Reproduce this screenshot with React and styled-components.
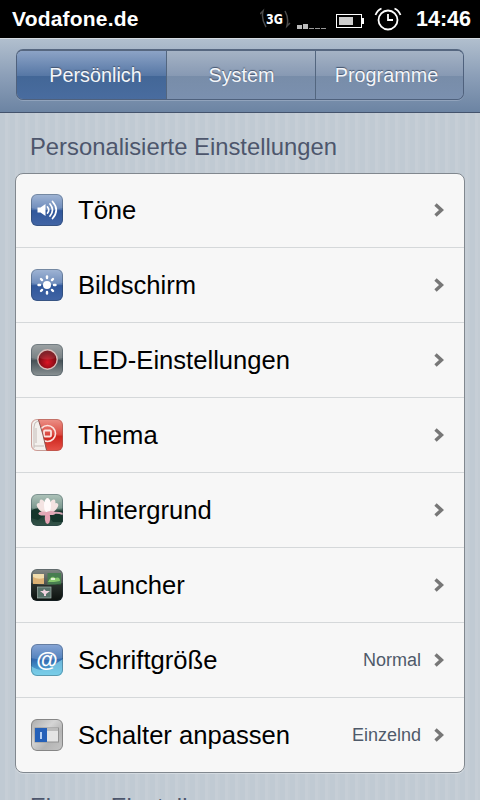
import React from 'react';
import styled, { createGlobalStyle } from 'styled-components';

const GlobalStyle = createGlobalStyle`
  * {
    box-sizing: border-box;
  }
  body {
    margin: 0;
    overflow: hidden;
    font-family: "Liberation Sans", Arial, sans-serif;
  }
`;

const Screen = styled.div`
  display: flex;
  flex-direction: column;
  width: 480px;
  height: 800px;
  overflow: hidden;
  background: repeating-linear-gradient(90deg, #c0cad3 0 5px, #c6ced6 5px 8px, #c3ccd4 8px 10px);
`;

const StatusBar = styled.header`
  display: flex;
  flex: none;
  align-items: center;
  height: 38px;
  padding: 0 9px 0 12px;
  background: #000;
  color: #fff;
  font-weight: bold;
`;
const Carrier = styled.span`
  flex: 1;
  font-size: 21px;
  letter-spacing: 0.2px;
`;
const StatusIcons = styled.svg`
  display: block;
  width: 148px;
  height: 38px;
  margin-right: 8px;
`;
const Clock = styled.span`
  width: 55px;
  font-size: 21.5px;
  white-space: nowrap;
`;

const NavBar = styled.nav`
  flex: none;
  height: 75px;
  padding: 10px 16px 0;
  background: linear-gradient(#b1bfce, #8c9fb8 50%, #6c84a3);
  border-top: 1px solid #d5dbe2;
  border-bottom: 1px solid #44536c;
`;
const Segments = styled.div`
  display: grid;
  grid-template-columns: 150px 149px 1fr;
  height: 51px;
  border: 1px solid #4f617d;
  border-top: 2px solid #566780;
  border-radius: 7px;
  overflow: hidden;
  box-shadow: 0 1px 0 #91a3bc;
`;
const Segment = styled.button`
  padding: 0 ${({ $right }) => $right || 0}px 0 ${({ $left }) => $left || 0}px;
  border: 0;
  border-right: ${({ $last }) => ($last ? '0' : '1px solid #53667f')};
  background: ${({ $active }) =>
    $active
      ? 'linear-gradient(#8ca3c6, #5677a5 52%, #436797 53%, #496c9f)'
      : 'linear-gradient(#a5b3c5, #8799b3 52%, #788da9 53%, #7b90af)'};
  color: #f4f6fa;
  font-family: inherit;
  font-size: 19.8px;
  text-shadow: 0 -1px 1px #44546d;
`;

const Heading = styled.h2`
  flex: none;
  height: 60px;
  margin: 0;
  padding-left: 30px;
  color: #4d566c;
  font-size: 23.8px;
  font-weight: normal;
  line-height: 67px;
  white-space: nowrap;
`;

const Card = styled.ul`
  flex: none;
  width: 450px;
  margin: 0 15px;
  padding: 0;
  list-style: none;
  border: 1px solid #81888f;
  border-radius: 8px;
  background: #f7f7f7;
  box-shadow: 0 1px 0 #d3dae0;
`;
const Row = styled.li`
  display: flex;
  align-items: center;
  height: 75px;
  padding: 0 20px 0 15px;
  border-bottom: 1px solid #d5d8da;
  &:first-child {
    height: 74px;
    padding-bottom: 1px;
  }
  &:last-child {
    height: 74px;
    border-bottom: 0;
  }
`;
const RowIcon = styled.svg`
  display: block;
  flex: none;
  width: 32px;
  height: 32px;
  border-radius: 6px;
`;
const Label = styled.span`
  flex: 1;
  margin-left: 15px;
  color: #000;
  font-size: 25.6px;
  white-space: nowrap;
`;
const Value = styled.span`
  margin-right: 13px;
  color: #4f5a6a;
  font-size: 18px;
`;
const Chevron = styled.svg`
  display: block;
  flex: none;
  width: 10px;
  height: 14px;
`;

const Gloss = () => (
  <>
    <path d="M0 0H32V14Q16 18 0 14Z" fill="#fff" opacity=".15" />
    <rect x=".5" y=".5" width="31" height="31" rx="5.5" fill="none" stroke="#263746" strokeOpacity=".35" />
  </>
);

const SoundIcon = () => (
  <RowIcon viewBox="0 0 32 32">
    <defs>
      <linearGradient id="blue" x2="0" y2="1">
        <stop offset="0" stopColor="#91a9ce" />
        <stop offset=".48" stopColor="#5477af" />
        <stop offset=".52" stopColor="#30579b" />
        <stop offset="1" stopColor="#4265a5" />
      </linearGradient>
    </defs>
    <rect width="32" height="32" fill="url(#blue)" />
    <path d="M6.500 13.500h3l5-3.500v12l-5-3.500h-3Z" fill="#fff" />
    <path d="M16.500 13q2.500 3 0 6M19 10q5 6 0 12M21.500 7.500q7.500 8.500 0 17" fill="none" stroke="#fff" strokeWidth="1.700" strokeLinecap="round" />
    <Gloss />
  </RowIcon>
);

const BrightnessIcon = () => (
  <RowIcon viewBox="0 0 32 32">
    <rect width="32" height="32" fill="url(#blue)" />
    <circle cx="16" cy="16" r="4" fill="#fff" />
    {[0, 45, 90, 135, 180, 225, 270, 315].map((angle) => (
      <path key={angle} d="M16 9V7.500" stroke="#fff" strokeWidth="2.400" strokeLinecap="round" transform={`rotate(${angle} 16 16)`} />
    ))}
    <Gloss />
  </RowIcon>
);

const LedIcon = () => (
  <RowIcon viewBox="0 0 32 32">
    <defs>
      <linearGradient id="steel" x2="0" y2="1">
        <stop offset="0" stopColor="#8d9496" />
        <stop offset=".48" stopColor="#5f696d" />
        <stop offset=".52" stopColor="#465156" />
        <stop offset="1" stopColor="#8c9496" />
      </linearGradient>
      <radialGradient id="led" cy=".65">
        <stop offset="0" stopColor="#dc1423" />
        <stop offset="1" stopColor="#740912" />
      </radialGradient>
    </defs>
    <rect width="32" height="32" fill="url(#steel)" />
    <Gloss />
    <circle cx="16.500" cy="15.500" r="9.700" fill="url(#led)" stroke="#d9bcb9" strokeWidth="1.400" />
    <path d="M8.500 14a8 8 0 0 1 16 0q-8 3-16 0Z" fill="#fff" opacity=".1" />
  </RowIcon>
);

const ThemeIcon = () => (
  <RowIcon viewBox="0 0 32 32">
    <defs>
      <linearGradient id="red" x2="0" y2="1">
        <stop offset="0" stopColor="#ec9187" />
        <stop offset=".48" stopColor="#db4a41" />
        <stop offset=".55" stopColor="#cd251d" />
        <stop offset="1" stopColor="#e75349" />
      </linearGradient>
    </defs>
    <rect width="32" height="32" fill="url(#red)" />
    <g fill="none" stroke="#fbe4df">
      <circle cx="16.500" cy="14.500" r="8" strokeWidth="1.600" />
      <rect x="13" y="11.500" width="7" height="6" rx="1" strokeWidth="1.800" />
    </g>
    <path d="M0 0H7Q12 13 15.500 32H0Z" fill="#f3f0ed" />
    <path d="M7.500 1Q12 14 15.500 31" fill="none" stroke="#8c5551" />
    <path d="M3 29V8q0-5 4-6M3 27H13M5 24V9" fill="none" stroke="#c5bcb8" />
    <rect x=".5" y=".5" width="31" height="31" rx="5.500" fill="none" stroke="#a25951" strokeOpacity=".55" />
  </RowIcon>
);

const WallpaperIcon = () => (
  <RowIcon viewBox="0 0 32 32">
    <defs>
      <linearGradient id="pond" x2="0" y2="1">
        <stop offset="0" stopColor="#a2bbb0" />
        <stop offset=".45" stopColor="#64857a" />
        <stop offset=".55" stopColor="#17362d" />
        <stop offset="1" stopColor="#35554a" />
      </linearGradient>
    </defs>
    <rect width="32" height="32" fill="url(#pond)" />
    <path d="M0 17Q9 10 15 20L7 26 0 24ZM17 22Q26 14 32 23V28H22Z" fill="#15352b" />
    <path d="M19 19.500Q26 18 32 20" fill="none" stroke="#d5a5b3" strokeWidth="2" />
    {/* lotus petals, back to front */}
    <g fill="#f2dfdd">
      <ellipse cx="11" cy="14" rx="3.200" ry="6.500" transform="rotate(-48 11 14)" />
      <ellipse cx="22" cy="14" rx="3.200" ry="6.500" transform="rotate(48 22 14)" />
      <ellipse cx="12.500" cy="12" rx="3" ry="7" transform="rotate(-24 12.500 12)" />
      <ellipse cx="20.500" cy="12" rx="3" ry="7" transform="rotate(24 20.500 12)" />
    </g>
    <ellipse cx="16.500" cy="11.500" rx="3.500" ry="7.500" fill="#fffafa" />
    <ellipse cx="12" cy="19.500" rx="4.500" ry="2" fill="#e2a9b7" />
    <ellipse cx="20" cy="19" rx="4.500" ry="2" fill="#e2a9b7" />
    <ellipse cx="16.500" cy="24" rx="2.700" ry="6" fill="#e7a3b5" />
    <Gloss />
  </RowIcon>
);

const LauncherIcon = () => (
  <RowIcon viewBox="0 0 32 32">
    <defs>
      <linearGradient id="dark" x2="0" y2="1">
        <stop offset="0" stopColor="#6d7470" />
        <stop offset=".5" stopColor="#29302c" />
        <stop offset="1" stopColor="#0b100d" />
      </linearGradient>
    </defs>
    <rect width="32" height="32" fill="url(#dark)" />
    <rect x="2" y="5" width="11" height="10" fill="#d7a55d" />
    <path d="M2 5H13V9Q7 11 2 8Z" fill="#efd79f" />
    <rect x="16.500" y="4" width="13.500" height="11.500" fill="#286732" />
    <path d="M17 13q4-8 7-4 5-2 5 3l-6 1Z" fill="#72bf54" />
    <path d="M20 10h4" stroke="#d9eec8" strokeWidth="2" />
    <rect x="6.500" y="18" width="13.500" height="11" fill="#587269" stroke="#a4b3ac" strokeWidth=".7" />
    <path d="m13 25-4-3 3 0 1-2 2 2 4 0-4 3v2h-2Z" fill="#f1d4df" />
    <Gloss />
  </RowIcon>
);

const FontIcon = () => (
  <RowIcon viewBox="0 0 32 32">
    <defs>
      <linearGradient id="sky" x2="0" y2="1">
        <stop offset="0" stopColor="#7597cf" />
        <stop offset=".5" stopColor="#316ab0" />
        <stop offset="1" stopColor="#5cc0e2" />
      </linearGradient>
    </defs>
    <rect width="32" height="32" fill="url(#sky)" />
    <path d="M0 22Q10 29 18 24T32 15V32H0Z" fill="#86d5ec" opacity=".7" />
    <text x="16" y="22.500" textAnchor="middle" fontFamily="Liberation Sans" fontSize="22" fontWeight="bold" fill="#fff">@</text>
    <Gloss />
  </RowIcon>
);

const SwitchIcon = () => (
  <RowIcon viewBox="0 0 32 32">
    <defs>
      <linearGradient id="silver" x2="1" y2="1">
        <stop offset="0" stopColor="#aaa" />
        <stop offset=".4" stopColor="#d5d5d5" />
        <stop offset=".65" stopColor="#b5b5b5" />
        <stop offset="1" stopColor="#c5c5c5" />
      </linearGradient>
    </defs>
    <rect width="32" height="32" fill="url(#silver)" />
    <rect x="4" y="9" width="23.500" height="14" fill="#e4e4e4" stroke="#929292" />
    <rect x="4" y="9" width="12" height="14" fill="#2560b8" />
    <path d="M10 13v7" stroke="#cfe3ff" strokeWidth="1.700" />
    <path d="M16 10h11v2H16Z" fill="#bcbcbc" />
    <rect x=".5" y=".5" width="31" height="31" rx="5.500" fill="none" stroke="#868686" />
  </RowIcon>
);

const rows = [
  { label: 'Töne', Icon: SoundIcon },
  { label: 'Bildschirm', Icon: BrightnessIcon },
  { label: 'LED-Einstellungen', Icon: LedIcon },
  { label: 'Thema', Icon: ThemeIcon },
  { label: 'Hintergrund', Icon: WallpaperIcon },
  { label: 'Launcher', Icon: LauncherIcon },
  { label: 'Schriftgröße', Icon: FontIcon, value: 'Normal' },
  { label: 'Schalter anpassen', Icon: SwitchIcon, value: 'Einzelnd' },
];

const App = () => {
  return (
    <Screen>
      <GlobalStyle />
      <StatusBar>
        <Carrier>Vodafone.de</Carrier>
        <StatusIcons viewBox="0 0 148 38">
          {/* network type */}
          <g fill="none" stroke="#4b4b4b" strokeWidth="1.500">
            <path d="M6 27Q1 19 3 11L0 14M25 11q4 7 2 15l3-3" />
          </g>
          <text x="6" y="24" fill="#fff" fontFamily="DejaVu Sans" fontSize="13.500" fontWeight="bold" textLength="17" lengthAdjust="spacingAndGlyphs">3G</text>
          {/* signal */}
          <path d="M37 25h5v4h-5ZM43 24h5v5h-5Z" fill="#bbb" />
          <path d="M49 28.500h5M55 28.500h5M61 28.500h5" stroke="#999" />
          {/* battery */}
          <rect x="76.500" y="14.500" width="25" height="13" fill="none" stroke="#fff" />
          <path d="M102 18h2v6h-2Z" fill="#fff" />
          <rect x="79" y="17" width="14" height="8" fill="#ccc" />
          {/* alarm */}
          <g fill="none" stroke="#fff" strokeWidth="1.800">
            <circle cx="128" cy="20" r="9.500" />
            <path d="M128 14v6h5M115.500 15q2-5 6-6.500M140.500 15q-2-5-6-6.500" />
          </g>
        </StatusIcons>
        <Clock>14:46</Clock>
      </StatusBar>
      <NavBar>
        <Segments>
          <Segment $active $left={8}>Persönlich</Segment>
          <Segment $left={1}>System</Segment>
          <Segment $last $right={6}>Programme</Segment>
        </Segments>
      </NavBar>
      <Heading>Personalisierte Einstellungen</Heading>
      <Card>
        {rows.map(({ label, Icon, value }) => (
          <Row key={label}>
            <Icon />
            <Label>{label}</Label>
            {value && <Value>{value}</Value>}
            <Chevron viewBox="0 0 10 14">
              <path d="M1.500 1.500 7.500 7l-6 5.500" fill="none" stroke="#777" strokeWidth="3.400" />
            </Chevron>
          </Row>
        ))}
      </Card>
      <Heading>Eigene Einstellungen</Heading>
    </Screen>
  );
};

export default App;
